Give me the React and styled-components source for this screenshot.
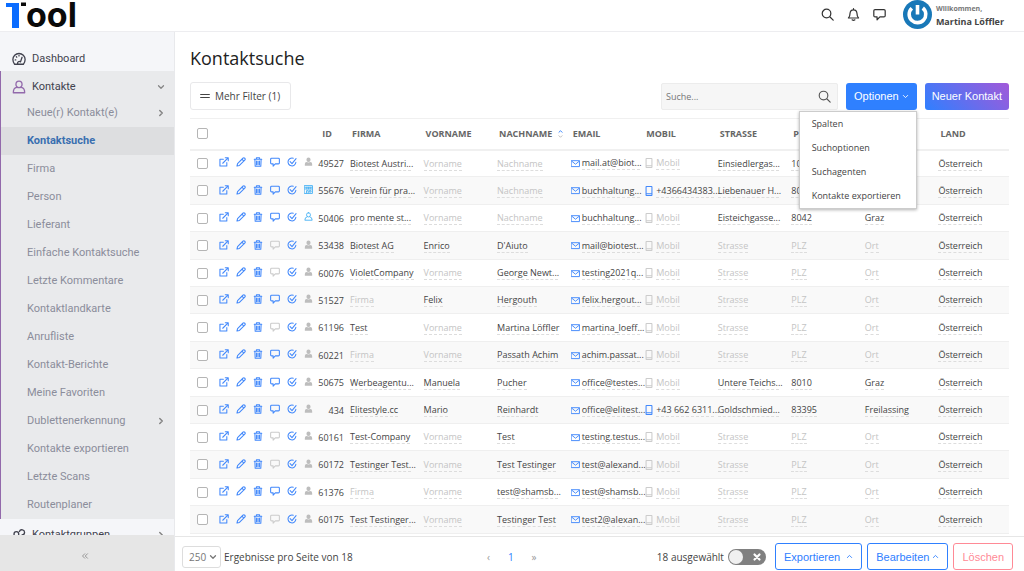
import React from 'react';
import styled, { createGlobalStyle, css } from 'styled-components';

const GlobalStyle = createGlobalStyle`
  *, *::before, *::after { box-sizing: border-box; }
  html, body { margin: 0; height: 100%; }
  #root { height: 100%; }
  body {
    font-family: "Open Sans", "Noto Sans", sans-serif;
    font-size: 10px;
    color: #444;
    background: #fff;
  }
  button, input, select { font: inherit; color: inherit; margin: 0; }
  a { color: inherit; text-decoration: none; }
`;

const blue = '#2f80ff';
const iconBlue = '#4389fb';
const ui = '"Liberation Sans", Arial, sans-serif';
const nav = 'Roboto, "Noto Sans", sans-serif';

/* ---------- icons ---------- */

const Svg = styled.svg.attrs({ viewBox: '0 0 16 16', 'aria-hidden': true })`
  display: block;
  flex: none;
  width: ${(p) => p.$size || 10}px;
  height: ${(p) => p.$size || 10}px;
  fill: none;
  stroke: currentColor;
  stroke-width: ${(p) => p.$stroke || 1.7};
  stroke-linecap: round;
  stroke-linejoin: round;
`;

const shapes = {
  open: <path d="M7 3.500H1.500v11h11V9M6 10l8.500-8.500M10 1.200h4.800V6" />,
  pencil: <path d="M1.500 14.500l1-4L11 2a1.800 1.800 0 0 1 3 3l-8.500 8.500zM9.500 3.500l3 3" />,
  trash: <path d="M2 3.500h12M5.500 3V1.200h5V3M3 3.500l.5 11.300h9L13 3.500M5.700 6.500v6M8 6.500v6M10.300 6.500v6" />,
  chat: <path d="M2.500 2h11q1.500 0 1.500 1.500v6q0 1.500-1.500 1.500H8.500L5 14.500V11H2.500Q1 11 1 9.500v-6Q1 2 2.500 2z" />,
  check: <path d="M14.200 8.500A6.300 6.300 0 1 1 10 2M5 7.500L8 10.500l6.500-8" />,
  bust: <path fill="currentColor" stroke="none" d="M8 1a3.600 3.600 0 0 1 3.600 3.600v.6A3.600 3.600 0 0 1 8 8.800a3.600 3.600 0 0 1-3.600-3.600v-.6A3.600 3.600 0 0 1 8 1zM1.500 15.500v-3q0-3.200 3.300-3.500 3.200 1.600 6.400 0 3.300.3 3.300 3.500v3z" />,
  person: <path d="M8 1.200a3.400 3.700 0 1 1 0 7.600 3.400 3.700 0 1 1 0-7.600zM5.500 8.500Q1.500 9 1.500 14.600h13Q14.500 9 10.500 8.500" />,
  shop: <path d="M1 1h14v14H1zM1 4h14M1 7h14M5 4v3M8 4v3M11 4v3M4.500 14.500V10h3v4.500M10 10h2.500v2.500H10z" />,
  mail: <path d="M1 3h14v10.500H1zM1.500 4L8 9.300 14.500 4" />,
  phone: <path d="M4.300.8h7.400q1 0 1 1v12.400q0 1-1 1H4.300q-1 0-1-1V1.800q0-1 1-1zM3.500 12.500h9" />,
  search: <path d="M6.800 1.500a5.300 5.300 0 1 1 0 10.600 5.300 5.300 0 1 1 0-10.600zM10.800 10.800L15 15" />,
  bell: <path d="M8 .8v1.400M1.800 12.300h12.400Q12.300 10.500 12.300 6.800 12 2.300 8 2.300T3.700 6.800q0 3.700-1.900 5.500zM6.300 14.600q1.700 1.200 3.400 0" />,
  down: <path d="M3 5.500l5 5 5-5" />,
  up: <path d="M3 10.500l5-5 5 5" />,
  right: <path d="M5.500 3l5 5-5 5" />,
  bars: <path d="M1 5.500h14M1 10.500h14" />,
  gauge: <path d="M3 14Q1 11.500 1 8.700a7 7 0 0 1 14 0q0 2.800-2 5.300zM6.500 13.500a2 2 0 0 1 3.200-2.200L11.500 6M3.700 9h.6M5 5.500l.4.4M8 4v.5" />,
  group: <path d="M5 4.200a2.700 2.700 0 1 1 0 5.400 2.700 2.700 0 1 1 0-5.400zM1 14.500q0-4.500 4-4.500t4 4.500zM8.500 4A3 3 0 1 1 11.500 8M11 9.500q4 0 4 5h-3" />,
  cross: <path d="M4 4l8 8M12 4l-8 8" />,
  collapse: <path d="M7.500 3.500L3 8l4.500 4.500M13 3.500L8.500 8l4.500 4.500" />,
};

const Icon = ({ name, size, stroke }) => (
  <Svg $size={size} $stroke={stroke}>{shapes[name]}</Svg>
);

/* ---------- shell ---------- */

const Shell = styled.div`
  display: flex;
  flex-direction: column;
  height: 100vh;
  overflow: hidden;
`;

const TopBar = styled.header`
  display: flex;
  align-items: center;
  flex: none;
  height: 32px;
  padding: 0 20px 2px 6px;
  border-bottom: 1px solid #ededf0;
`;

const Logo = styled.a`
  display: flex;
  align-items: flex-end;
  height: 28px;
  margin-right: auto;
  font: 700 34px/28px Inter, sans-serif;
  color: #0a0a0a;
`;

const LogoMark = styled.svg`
  width: 20px;
  height: 28px;
`;

const IconButton = styled.button`
  display: flex;
  padding: 0;
  margin-right: 13px;
  border: 0;
  background: none;
  color: #333;
`;

const Account = styled.a`
  display: flex;
  align-items: center;
  gap: 4px;
  height: 29px;
  margin-left: 4px;
  font: 700 9px/13px "Open Sans", sans-serif;
  color: #444;
`;

const Welcome = styled.small`
  display: block;
  font: 700 7px/13px "Open Sans", sans-serif;
  color: #777;
`;

const Body = styled.div`
  display: flex;
  flex: 1;
  min-height: 0;
`;

/* ---------- sidebar ---------- */

const Sidebar = styled.nav`
  display: flex;
  flex-direction: column;
  flex: none;
  width: 175px;
  background: #f5f6f9;
  border-right: 1px solid #e8e9ec;
  font: 11px/25px ${nav};
  color: #41424e;
`;

const NavScroll = styled.div`
  flex: 1;
  min-height: 0;
  padding-top: 11px;
  overflow: hidden;
`;

const NavGroup = styled.div`
  background: #e9eaec;
  box-shadow: inset 1px 0 #9269ab;
`;

const NavItem = styled.a`
  display: flex;
  align-items: center;
  height: 28px;
  padding: 3px 9px 0 12px;
  gap: 6px;
  svg:last-child { color: #858585; }
  ${(p) => p.$accent && css`svg:first-child { color: #9269ab; }`}
  ${(p) => p.$sub && css`padding: 0 9px 1px 27px; color: #8b8d9b;`}
  ${(p) => p.$active && css`background: #dddee0; color: #3a6fb0; font-weight: 700; margin-left: 1px; padding-left: 26px;`}
`;

const NavText = styled.span`
  flex: 1;
`;

const Collapse = styled.button`
  display: flex;
  align-items: center;
  justify-content: center;
  height: 36px;
  padding: 5px 8px 0 4px;
  border: 0;
  background: #e6e6e6;
  color: #888;
`;

/* ---------- content ---------- */

const Main = styled.main`
  display: flex;
  flex-direction: column;
  flex: 1;
  min-width: 0;
`;

const Content = styled.div`
  flex: 1;
  min-height: 0;
  padding: 14px 15px 0;
  overflow: hidden;
`;

const Title = styled.h1`
  margin: 0 0 12px;
  font-size: 18px;
  font-weight: 400;
  line-height: 24px;
  color: #222;
`;

const Toolbar = styled.div`
  display: flex;
  align-items: center;
  gap: 8px;
  margin-bottom: 8px;
`;

const FilterButton = styled.button`
  display: flex;
  align-items: center;
  gap: 5px;
  height: 28px;
  padding: 0 10px 0 9px;
  margin-right: auto;
  border: 1px solid #e8e8ea;
  border-radius: 3px;
  background: #fff;
  font-size: 10px;
`;

const SearchBox = styled.label`
  display: flex;
  align-items: center;
  width: 177px;
  height: 27px;
  padding: 0 6px 0 4px;
  border: 1px solid #ececec;
  border-radius: 2px;
  background: #f6f6f6;
  color: #555;
`;

const SearchInput = styled.input`
  flex: 1;
  min-width: 0;
  padding: 0;
  border: 0;
  outline: 0;
  background: none;
  font-size: 9px;
  &::placeholder { color: #777; opacity: 1; }
`;

const Button = styled.button`
  display: flex;
  align-items: center;
  justify-content: center;
  gap: ${(p) => p.$gap || 3}px;
  height: 27px;
  padding: 0 8px;
  border: 1px solid ${(p) => p.$tone || blue};
  border-radius: 3px;
  background: #fff;
  color: ${(p) => p.$tone || blue};
  font: 11px ${ui};
  white-space: nowrap;
  ${(p) => p.$solid && css`border: 0; color: #fff; background: ${blue};`}
  ${(p) => p.$gradient && css`padding: 0 7px; background: linear-gradient(45deg, ${blue}, #a259d9);`}
`;

const MenuAnchor = styled.div`
  position: relative;
`;

const Menu = styled.div`
  position: absolute;
  top: 28px;
  right: 0;
  z-index: 2;
  width: 118px;
  border: 1px solid #ccc;
  background: #fff;
  box-shadow: 0 1px 3px rgba(0, 0, 0, 0.3);
`;

const MenuItem = styled.a`
  display: block;
  padding-left: 12px;
  font-size: 9px;
  line-height: 24px;
  color: #444;
`;

/* ---------- table ---------- */

const Table = styled.table`
  width: 100%;
  table-layout: fixed;
  border-collapse: collapse;
  border-top: 1px solid #f0f0f0;
  font-size: 9px;
`;

const Col = styled.col`
  width: ${(p) => (p.$w ? `${p.$w}px` : 'auto')};
`;

const Th = styled.th`
  height: 31px;
  padding: 0 ${(p) => (p.$right ? 15 : 5)}px 0 5px;
  border-bottom: 2px solid #f0f0f0;
  font-weight: 700;
  text-align: ${(p) => (p.$right ? 'right' : 'left')};
  white-space: nowrap;
  color: #666;
  ${(p) => p.$check && css`padding: 0 0 0 7px;`}
`;

const HeadInner = styled.span`
  display: flex;
  align-items: center;
  gap: 6px;
`;

const Sort = styled.span`
  display: flex;
  flex-direction: column;
  color: ${blue};
  svg + svg { color: #bbb; }
`;

const Tr = styled.tr`
  height: 27px;
  border-bottom: 1px solid #efefef;
  &:nth-child(5n + 2), &:nth-child(5n + 4) { height: 28px; }
  &:nth-child(even) { background: #f9f9f9; }
`;

const Td = styled.td`
  padding: 0 0 0 3px;
  white-space: nowrap;
  vertical-align: middle;
  ${(p) => p.$right && css`padding: 0 3px 0 0; text-align: right;`}
  ${(p) => p.$check && css`padding: 0 0 0 7px;`}
`;

const Check = styled.input.attrs({ type: 'checkbox' })`
  appearance: none;
  display: block;
  width: 11px;
  height: 11px;
  border: 1px solid #b5b5b5;
  border-radius: 2px;
  background: #fff;
`;

const Actions = styled.div`
  display: flex;
  gap: 7px;
  margin-left: -1px;
  padding-bottom: 2px;
`;

const Action = styled.button`
  display: flex;
  padding: 0;
  border: 0;
  background: none;
  color: ${(p) => p.$color || iconBlue};
`;

const Value = styled.span`
  display: inline-block;
  vertical-align: middle;
  width: ${(p) => (p.$w ? `${p.$w}px` : 'auto')};
  border-bottom: 1px dashed #ddd;
  line-height: 13px;
  color: ${(p) => (p.$empty ? '#c4c4c4' : '#444')};
`;

const Contact = styled.span`
  display: flex;
  align-items: center;
  gap: 2px;
  color: ${(p) => (p.$off ? '#ccc' : iconBlue)};
`;

/* ---------- footer ---------- */

const Footer = styled.footer`
  display: flex;
  align-items: center;
  flex: none;
  height: 35px;
  padding: 5px 11px 0 7px;
  border-top: 1px solid #e6e6e6;
`;

const PageSize = styled.label`
  display: flex;
  align-items: center;
  gap: 3px;
  white-space: nowrap;
`;

const SelectWrap = styled.span`
  display: grid;
  align-items: center;
  justify-items: end;
  color: #777;
  > * { grid-area: 1 / 1; }
  svg { margin-right: 4px; pointer-events: none; }
`;

const Select = styled.select`
  appearance: none;
  width: 39px;
  height: 22px;
  padding: 0 0 0 6px;
  border: 1px solid #ddd;
  border-radius: 3px;
  background: #fff;
`;

const Pager = styled.div`
  display: flex;
  flex: 1;
  align-items: center;
  justify-content: center;
  gap: 18px;
  padding-left: 14px;
  color: #999;
`;

const PagerLink = styled.a`
  color: ${(p) => (p.$current ? blue : '#999')};
`;

const FooterRight = styled.div`
  display: flex;
  align-items: center;
  gap: 5px;
`;

const SwitchLabel = styled.label`
  display: flex;
  align-items: center;
  gap: 4px;
  margin-right: 4px;
  white-space: nowrap;
`;

const SwitchTrack = styled.span`
  display: flex;
  align-items: center;
  justify-content: space-between;
  width: 38px;
  height: 16px;
  padding: 0 4px 0 1px;
  border-radius: 8px;
  background: #808080;
  color: #fff;
`;

const SwitchInput = styled.input.attrs({ type: 'checkbox', role: 'switch' })`
  appearance: none;
  width: 14px;
  height: 14px;
  border-radius: 7px;
  background: #f0f0f0;
`;

const subItems = [
  ['Neue(r) Kontakt(e)', true], ['Kontaktsuche'], ['Firma'], ['Person'], ['Lieferant'],
  ['Einfache Kontaktsuche'], ['Letzte Kommentare'], ['Kontaktlandkarte'], ['Anrufliste'],
  ['Kontakt-Berichte'], ['Meine Favoriten'], ['Dublettenerkennung', true],
  ['Kontakte exportieren'], ['Letzte Scans'], ['Routenplaner'],
];

/* id, firma, vorname, nachname, email, mobil, strasse, plz, ort, has comment, kind */
const rows = [
  ['49527', 'Biotest Austri...', '', '', 'mail.at@biot...', '', 'Einsiedlergas...', '1050', 'Wien', 1, 'bust'],
  ['55676', 'Verein für pra...', '', '', 'buchhaltung...', '+4366434383...', 'Liebenauer H...', '8041', 'Graz', 1, 'shop'],
  ['50406', 'pro mente st...', '', '', 'buchhaltung...', '', 'Eisteichgasse...', '8042', 'Graz', 1, 'person'],
  ['53438', 'Biotest AG', 'Enrico', "D'Aiuto", 'mail@biotest...', '', '', '', '', 0, 'bust'],
  ['60076', 'VioletCompany', '', 'George Newt...', 'testing2021q...', '', '', '', '', 0, 'bust'],
  ['51527', '', 'Felix', 'Hergouth', 'felix.hergout...', '', '', '', '', 1, 'bust'],
  ['61196', 'Test', '', 'Martina Löffler', 'martina_loeff...', '', '', '', '', 0, 'bust'],
  ['60221', '', '', 'Passath Achim', 'achim.passat...', '', '', '', '', 1, 'bust'],
  ['50675', 'Werbeagentu...', 'Manuela', 'Pucher', 'office@testes...', '', 'Untere Teichs...', '8010', 'Graz', 1, 'bust'],
  ['434', 'Elitestyle.cc', 'Mario', 'Reinhardt', 'office@elitest...', '+43 662 6311...', 'Goldschmied...', '83395', 'Freilassing', 1, 'bust'],
  ['60161', 'Test-Company', '', 'Test', 'testing.testus...', '', '', '', '', 0, 'bust'],
  ['60172', 'Testinger Test...', '', 'Test Testinger', 'test@alexand...', '', '', '', '', 0, 'bust'],
  ['61376', '', '', 'test@shamsb...', 'test@shamsb...', '', '', '', '', 1, 'bust'],
  ['60175', 'Test Testinger...', '', 'Testinger Test', 'test2@alexan...', '', '', '', '', 0, 'bust'],
];

const Field = ({ value, label, width = 61 }) => (
  <Value $empty={!value} $w={value.endsWith('...') ? width : 0}>{value || label}</Value>
);

const Row = ({ row }) => {
  const [id, firma, vorname, nachname, email, mobil, strasse, plz, ort, comment, kind] = row;
  const kindColor = kind === 'bust' ? '#bdbdbd' : '#4fb4f5';
  return (
    <Tr>
      <Td $check><Check aria-label={`Kontakt ${id} auswählen`} /></Td>
      <Td>
        <Actions>
          <Action aria-label="Öffnen"><Icon name="open" /></Action>
          <Action aria-label="Bearbeiten"><Icon name="pencil" /></Action>
          <Action aria-label="Löschen"><Icon name="trash" /></Action>
          <Action aria-label="Kommentar" $color={comment ? iconBlue : '#ccc'}><Icon name="chat" /></Action>
          <Action aria-label="Erledigt"><Icon name="check" /></Action>
          <Action aria-label="Kontaktart" $color={kindColor}><Icon name={kind} size={9} /></Action>
        </Actions>
      </Td>
      <Td $right>{id}</Td>
      <Td><Field value={firma} label="Firma" /></Td>
      <Td><Field value={vorname} label="Vorname" /></Td>
      <Td><Field value={nachname} label="Nachname" /></Td>
      <Td><Contact><Icon name="mail" size={9} /><Field value={email} label="Email" width={58} /></Contact></Td>
      <Td><Contact $off={!mobil}><Icon name="phone" size={10} /><Field value={mobil} label="Mobil" width={58} /></Contact></Td>
      <Td><Field value={strasse} label="Strasse" /></Td>
      <Td><Field value={plz} label="PLZ" /></Td>
      <Td><Field value={ort} label="Ort" /></Td>
      <Td><Field value="Österreich" /></Td>
    </Tr>
  );
};

export default function App() {
  return (
    <Shell>
      <GlobalStyle />
      <TopBar>
        <Logo href="#" aria-label="1Tool">
          <LogoMark viewBox="0 0 20 28">
            <path fill="#0a6cff" d="M0 2h13v25H6V6H0z" />
            <path fill="#0a0a0a" d="M15 1.500h5V5h-5z" />
          </LogoMark>
          ool
        </Logo>
        <IconButton aria-label="Suchen"><Icon name="search" size={13} stroke={1.500} /></IconButton>
        <IconButton aria-label="Benachrichtigungen"><Icon name="bell" size={13} stroke={1.500} /></IconButton>
        <IconButton aria-label="Nachrichten"><Icon name="chat" size={13} stroke={1.500} /></IconButton>
        <Account href="#">
          <svg width="29" height="29" viewBox="0 0 29 29" aria-hidden="true">
            <circle cx="14.500" cy="14.500" r="14.500" fill="#1878b8" />
            <path d="M8.800 8.300a8.300 8.300 0 1 0 11-.3M14.500 5v9.500" fill="none" stroke="#fff" strokeWidth="3.600" />
          </svg>
          <span><Welcome>Willkommen,</Welcome>Martina Löffler</span>
        </Account>
      </TopBar>
      <Body>
        <Sidebar>
          <NavScroll>
            <NavItem href="#"><Icon name="gauge" size={14} stroke={1.500} /><NavText>Dashboard</NavText></NavItem>
            <NavGroup>
              <NavItem href="#" $accent>
                <Icon name="person" size={14} stroke={1.500} /><NavText>Kontakte</NavText>
                <Icon name="down" size={8} stroke={2.500} />
              </NavItem>
              {subItems.map(([text, more]) => (
                <NavItem key={text} href="#" $sub $active={text === 'Kontaktsuche'}>
                  <NavText>{text}</NavText>
                  {more && <Icon name="right" size={8} stroke={3} />}
                </NavItem>
              ))}
            </NavGroup>
            <NavItem href="#">
              <Icon name="group" size={14} stroke={1.500} /><NavText>Kontaktgruppen</NavText>
              <Icon name="right" size={8} stroke={3} />
            </NavItem>
          </NavScroll>
          <Collapse aria-label="Menü einklappen"><Icon name="collapse" size={8} /></Collapse>
        </Sidebar>
        <Main>
          <Content>
            <Title>Kontaktsuche</Title>
            <Toolbar>
              <FilterButton><Icon name="bars" />Mehr Filter (1)</FilterButton>
              <SearchBox>
                <SearchInput placeholder="Suche..." aria-label="Suche" />
                <Icon name="search" size={13} stroke={1.400} />
              </SearchBox>
              <MenuAnchor>
                <Button $solid aria-expanded="true">Optionen<Icon name="down" size={7} stroke={2} /></Button>
                <Menu>
                  {['Spalten', 'Suchoptionen', 'Suchagenten', 'Kontakte exportieren'].map((t) => (
                    <MenuItem key={t} href="#">{t}</MenuItem>
                  ))}
                </Menu>
              </MenuAnchor>
              <Button $solid $gradient>Neuer Kontakt</Button>
            </Toolbar>
            <Table>
              <colgroup>
                <Col $w={27} /><Col $w={98} /><Col $w={32} />
                <Col /><Col /><Col /><Col /><Col /><Col /><Col /><Col /><Col />
              </colgroup>
              <thead>
                <tr>
                  <Th $check><Check aria-label="Alle auswählen" /></Th>
                  <Th aria-label="Aktionen" />
                  <Th $right>ID</Th>
                  <Th>FIRMA</Th>
                  <Th>VORNAME</Th>
                  <Th>
                    <HeadInner>NACHNAME
                      <Sort><Icon name="up" size={5} stroke={3} /><Icon name="down" size={5} stroke={3} /></Sort>
                    </HeadInner>
                  </Th>
                  <Th>EMAIL</Th>
                  <Th>MOBIL</Th>
                  <Th>STRASSE</Th>
                  <Th>PLZ</Th>
                  <Th>ORT</Th>
                  <Th>LAND</Th>
                </tr>
              </thead>
              <tbody>{rows.map((r) => <Row key={r[0]} row={r} />)}</tbody>
            </Table>
          </Content>
          <Footer>
            <PageSize>
              <SelectWrap>
                <Select defaultValue="250"><option>250</option><option>100</option></Select>
                <Icon name="down" size={8} stroke={2.500} />
              </SelectWrap>
              Ergebnisse pro Seite von 18
            </PageSize>
            <Pager>
              <PagerLink href="#">‹</PagerLink>
              <PagerLink href="#" $current>1</PagerLink>
              <PagerLink href="#">»</PagerLink>
            </Pager>
            <FooterRight>
              <SwitchLabel>
                18 ausgewählt
                <SwitchTrack><SwitchInput /><Icon name="cross" stroke={3.500} /></SwitchTrack>
              </SwitchLabel>
              <Button $gap={6}>Exportieren<Icon name="up" size={7} stroke={2} /></Button>
              <Button>Bearbeiten<Icon name="up" size={7} stroke={2} /></Button>
              <Button $tone="#ff8a96">Löschen</Button>
            </FooterRight>
          </Footer>
        </Main>
      </Body>
    </Shell>
  );
}
